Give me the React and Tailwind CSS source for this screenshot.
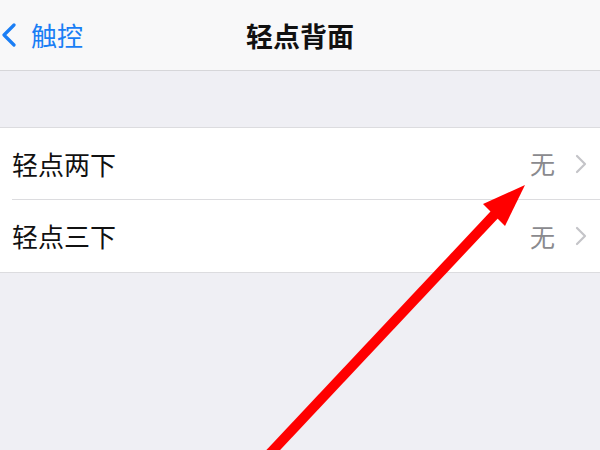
import React from "react";

const font = { fontFamily: '"Noto Sans CJK SC", "Noto Sans", sans-serif' };

function Chevron() {
  return (
    <svg width="12" height="20" viewBox="0 0 12 20" className="shrink-0">
      <path d="M2 2 L10 10 L2 18" fill="none" stroke="#c4c4c8" strokeWidth="2.2" strokeLinecap="round" strokeLinejoin="round" />
    </svg>
  );
}

function Row({ label, border }) {
  return (
    <div className="flex h-[72px] items-stretch pl-[12px]">
      <div className={`flex flex-1 items-center pr-[13px] ${border ? "border-b border-[#dcdcdf]" : ""}`}>
        <span className="flex-1 text-[26px] text-[#111] leading-none">{label}</span>
        <span className="text-[25px] text-[#8a8a8e] leading-none mr-[20px]">无</span>
        <Chevron />
      </div>
    </div>
  );
}

export default function App() {
  return (
    <div className="relative w-[600px] h-[450px] overflow-hidden bg-[#efeff4]" style={font}>
      <div className="relative flex h-[71px] items-center bg-[#f8f8f9] border-b border-[#d6d6d9]">
        <div className="flex items-center pl-[1px]">
          <svg width="16" height="24" viewBox="0 0 16 24">
            <path d="M13 2 L3 12 L13 22" fill="none" stroke="#1a7ef5" strokeWidth="3.2" strokeLinecap="round" strokeLinejoin="round" />
          </svg>
          <span className="ml-[14px] text-[26px] text-[#1a7ef5] leading-none">触控</span>
        </div>
        <div className="absolute inset-0 flex items-center justify-center">
          <span className="text-[27px] font-semibold text-[#111] leading-none">轻点背面</span>
        </div>
      </div>
      <div className="h-[56px]" />
      <div className="bg-white border-y border-[#dcdcdf]">
        <Row label="轻点两下" border />
        <Row label="轻点三下" />
      </div>
      <svg className="absolute inset-0 pointer-events-none" width="600" height="450" viewBox="0 0 600 450">
        <line x1="262" y1="462" x2="496" y2="213" stroke="#ff0000" strokeWidth="10" />
        <polygon points="525,185 483,204 505,226" fill="#ff0000" />
      </svg>
    </div>
  );
}
